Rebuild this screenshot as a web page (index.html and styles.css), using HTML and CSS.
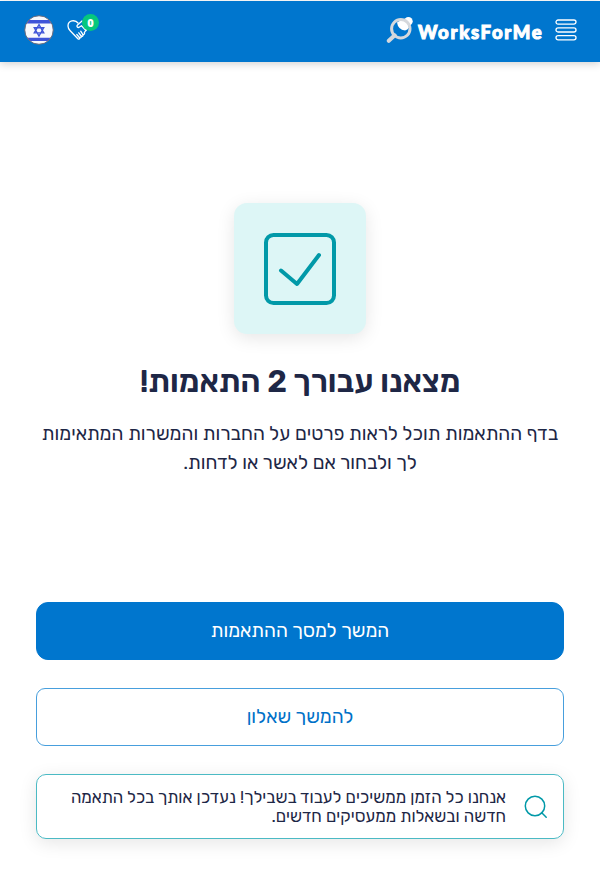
FILE: index.html
```html
<!DOCTYPE html>
<html lang="he" dir="rtl">
<head>
<meta charset="utf-8">
<title>WorksForMe</title>
<link rel="stylesheet" href="styles.css">
</head>
<body>
<header class="topbar">
  <div class="side">
    <svg class="menu" width="22" height="22" viewBox="0 0 22 22" fill="none" stroke="#fff" stroke-width="1.3">
      <rect x="1" y="1" width="20" height="4.2" rx="2.1"/>
      <rect x="1" y="8.8" width="20" height="4.2" rx="2.1"/>
      <rect x="1" y="16.6" width="20" height="4.2" rx="2.1"/>
    </svg>
    <div class="brand" dir="ltr">
      <svg width="28" height="28" viewBox="0 0 28 28">
        <circle cx="22.4" cy="5.3" r="4.3" fill="#fff"/>
        <path d="M11 6.500Q15 3 21 5.500l2 6a6 6 0 0 1-4 3q-7-1-8-8z" fill="#fff"/>
        <path d="M8.700 19.300 2.800 24.800" stroke="#d5d8dc" stroke-width="4" stroke-linecap="round"/>
        <circle cx="14.800" cy="12.700" r="9.200" fill="none" stroke="#d5d8dc" stroke-width="3"/>
      </svg>
      <span class="name">WorksForMe</span>
    </div>
  </div>
  <div class="side tools">
    <div class="matches">
      <svg width="22" height="22" viewBox="0 0 22 22" fill="none" stroke="#fff" stroke-width="1.3" stroke-linecap="round" stroke-linejoin="round">
        <path d="M11 4C8 .2 1 1.300 1 7c0 2 .9 3.400 2.200 4.700l7.700 8.100c1 .9 2.300-.2 1.500-1.300 1.100.8 2.600-.3 1.700-1.500 1.200.7 2.600-.4 1.700-1.600 1.100.5 2.300-.6 1.500-1.700l2.500-3.700"/>
        <path d="M15 2 10.500 6c-1.500 1.500.3 3.300 2 2l2-1.300 4.500 4.800M9.800 15.500l2.600 3M11.800 13.800l2.300 3.200M13.700 12.200l2.100 3.200"/>
      </svg>
      <span class="badge">0</span>
    </div>
    <svg class="flag" width="30" height="30" viewBox="0 0 30 30">
      <defs><clipPath id="disc"><circle cx="15" cy="15" r="14"/></clipPath></defs>
      <g clip-path="url(#disc)">
        <path fill="#f8f9fd" d="M0 0h30v30H0z"/>
        <path fill="#3f54d8" d="M0 5h30v3.400H0zM0 22.800h30v3.200H0z"/>
      </g>
      <circle cx="15" cy="15" r="14.300" fill="none" stroke="#706f7d" stroke-width="1"/>
      <path d="m15 9.700 4.700 8.200h-9.400zM15 21l4.700-8.200h-9.400z" fill="none" stroke="#3f54d8" stroke-width="1.400"/>
    </svg>
  </div>
</header>
<main>
  <div class="tile">
    <svg width="74" height="74" viewBox="0 0 74 74" fill="none" stroke="#0199a8" stroke-width="4">
      <rect x="3" y="3" width="68" height="68" rx="7.500"/>
      <path d="M18 38.500 34 52 56 23" stroke-linecap="round" stroke-linejoin="round"/>
    </svg>
  </div>
  <h1>מצאנו עבורך 2 התאמות!</h1>
  <p class="lead">בדף ההתאמות תוכל לראות פרטים על החברות והמשרות המתאימות<br>לך ולבחור אם לאשר או לדחות.</p>
  <div class="actions">
    <button class="btn primary">המשך למסך ההתאמות</button>
    <button class="btn outline">להמשך שאלון</button>
    <div class="note">
      <svg width="24" height="24" viewBox="0 0 24 24" fill="none" stroke="#0199a8" stroke-width="1.500" stroke-linecap="round">
        <circle cx="11" cy="11" r="9.700"/><path d="m17.500 17.500 4.700 4.700"/>
      </svg>
      <p>אנחנו כל הזמן ממשיכים לעבוד בשבילך! נעדכן אותך בכל התאמה<br>חדשה ובשאלות ממעסיקים חדשים.</p>
    </div>
  </div>
</main>
</body>
</html>
```
FILE: styles.css
```css
* { box-sizing: border-box; }
body { margin: 0; height: 874px; background: #fff; color: #1e2746; font-family: Rubik, "Open Sans", "DejaVu Sans", sans-serif; overflow: hidden; }
.topbar { height: 61px; margin-top: 1px; padding: 0 23px 3px 24px; background: #0076ce; display: flex; justify-content: space-between; align-items: center; box-shadow: 0 2px 8px rgba(0,0,0,.18); }
.side { display: flex; align-items: center; }
.menu { display: block; }
.brand { display: flex; align-items: center; gap: 4px; margin-right: 11px; }
.brand svg { display: block; }
.name { width: 126px; color: #fff; font: 900 18.5px/26px Lato, sans-serif; -webkit-text-stroke: 1px #fff; white-space: nowrap; letter-spacing: 1.7px; padding-top: 3px; }
.tools { gap: 11px; }
.matches { position: relative; width: 34px; height: 22px; display: flex; justify-content: flex-end; }
.matches svg { margin-right: 10px; margin-left: 2px; flex: none; }
.badge { position: absolute; right: 0; top: -5px; width: 17px; height: 17px; border-radius: 50%; background: #06c77d; color: #fff; font: 800 11px/17px "Open Sans", sans-serif; text-align: center; }
.flag { display: block; }
main { padding: 141px 36px 0; text-align: center; }
.tile { width: 132px; height: 131px; margin: 0 auto; border-radius: 13px; background: #ddf6f6; display: flex; align-items: center; justify-content: center; box-shadow: 0 4px 18px rgba(0,0,0,.1); }
h1 { margin: 27px 0 0; font-size: 31.2px; line-height: 42px; font-weight: 600; white-space: nowrap; }
.lead { margin: 16px 0 0; font-size: 19.2px; line-height: 29px; white-space: nowrap; }
.actions { margin-top: 125px; display: grid; gap: 28px; }
.btn { width: 100%; height: 58px; padding: 0; border-radius: 12px; border: 1px solid #0076ce; font: 400 19.2px/28px Rubik, "Open Sans", sans-serif; }
.primary { background: #0076ce; color: #fff; }
.outline { background: #fff; color: #0071c8; border-color: #479fdd; border-radius: 9px; }
.note { height: 65px; border: 1px solid #4bbac4; border-radius: 10px; padding: 0 15px; display: flex; align-items: center; gap: 18px; text-align: right; box-shadow: 0 4px 18px rgba(0,0,0,.1); }
.note p { margin: 0; font-size: 16.85px; line-height: 19px; white-space: nowrap; }
```
